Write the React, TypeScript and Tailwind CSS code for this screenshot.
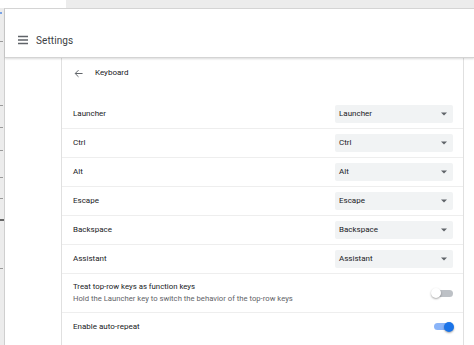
import React from 'react';

const font = { fontFamily: 'Roboto, "Noto Sans", Arial, sans-serif' };

const keys = ['Launcher', 'Ctrl', 'Alt', 'Escape', 'Backspace', 'Assistant'];

// tiny marks on the window edge behind
const ticks = [33, 97, 119, 142, 169, 190, 212, 260];

function Select({ value }: { value: string }) {
  return (
    <div className="w-[118px] h-[18px] bg-[#f1f3f4] rounded-[2px] flex items-center justify-between pl-[4px] pr-[5px] text-[8px] text-[#202124]">
      <span>{value}</span>
      <svg width="6" height="4" viewBox="0 0 6 4" className="mr-[1px]">
        <path d="M0 0.5h6L3 3.5z" fill="#5f6368" />
      </svg>
    </div>
  );
}

function Toggle({ on }: { on: boolean }) {
  return (
    <div className="relative w-[21px] h-[12px] mr-[10px] flex items-center">
      <div className={`ml-[2px] w-[19px] h-[7px] rounded-full ${on ? 'bg-[#8ab4f8]' : 'bg-[#bdc1c6]'}`} />
      <div
        className={`absolute top-[1px] w-[10px] h-[10px] rounded-full shadow-[0_1px_2px_rgba(0,0,0,0.35)] ${
          on ? 'right-[-1px] bg-[#1a73e8]' : 'left-[-1px] bg-white'
        }`}
      />
    </div>
  );
}

export default function App() {
  return (
    <div className="w-[474px] h-[345px] overflow-hidden bg-white flex flex-col" style={font}>
      {/* window behind, top edge */}
      <div className="h-[8px] flex shrink-0">
        <div className="w-[66px] bg-white" />
        <div className="flex-1 bg-[#ececec]" />
      </div>

      <div className="flex-1 flex min-h-0">
        {/* left strip of another window */}
        <div className="relative w-[5px] bg-[#ececec] border-r border-[#cfcfcf] shrink-0">
          <div className="absolute left-0 top-[4px] w-[2px] h-[2px] bg-[#7aa3e6]" />
          {ticks.map(t => (
            <div key={t} className="absolute left-0 w-[3px] h-px bg-[#9a9a9a]" style={{ top: t }} />
          ))}
          <div className="absolute left-0 top-[211px] w-[4px] h-[2px] bg-[#666]" />
        </div>

        {/* settings window */}
        <div className="flex-1 flex flex-col border-t border-[#d6d6d6] bg-white min-w-0">
          <div className="h-[49px] shrink-0 flex items-center pt-[14px] border-b border-[#d4d4d4] shadow-[0_1px_2px_rgba(0,0,0,0.15)] relative z-10">
            <svg width="12" height="12" viewBox="0 0 12 12" className="ml-[12px]">
              <path d="M1 2.5h10M1 6h10M1 9.5h10" stroke="#5f6368" strokeWidth="1.4" />
            </svg>
            <span className="ml-[7px] text-[10px] text-[#3c4043] tracking-[0.1px]">Settings</span>
          </div>

          <div className="flex-1 flex min-h-0">
            <div className="w-[57px] border-r border-[#e0e0e0] shrink-0" />

            <div className="w-[402px] border-r border-[#e0e0e0] shrink-0 flex flex-col">
              <div className="h-[41px] flex items-start pt-[9px] pl-[12px]">
                <div className="h-[12px] flex items-center">
                  <svg width="9" height="9" viewBox="0 0 10 10">
                    <path d="M9.5 5H1.5M5 1.3L1.3 5 5 8.7" fill="none" stroke="#5f6368" strokeWidth="1.1" />
                  </svg>
                  <span className="ml-[12px] text-[8px] text-[#202124]">Keyboard</span>
                </div>
              </div>

              {keys.map((k, i) => (
                <div
                  key={k}
                  className={`h-[29px] flex items-center justify-between pl-[11px] pr-[10px] ${
                    i > 0 ? 'border-t border-[#eeeeee]' : ''
                  }`}
                >
                  <span className="text-[8px] text-[#202124]">{k}</span>
                  <Select value={k} />
                </div>
              ))}

              <div className="h-[39px] border-t border-[#eeeeee] flex items-center justify-between pl-[11px]">
                <div className="flex flex-col">
                  <span className="text-[7.8px] leading-[12px] text-[#202124]">Treat top-row keys as function keys</span>
                  <span className="text-[7.7px] leading-[12px] text-[#5f6368]">
                    Hold the Launcher key to switch the behavior of the top-row keys
                  </span>
                </div>
                <Toggle on={false} />
              </div>

              <div className="h-[28px] border-t border-[#eeeeee] flex items-center justify-between pl-[11px]">
                <span className="text-[8px] text-[#202124]">Enable auto-repeat</span>
                <Toggle on={true} />
              </div>
            </div>

            <div className="flex-1" />
          </div>
        </div>
      </div>
    </div>
  );
}
